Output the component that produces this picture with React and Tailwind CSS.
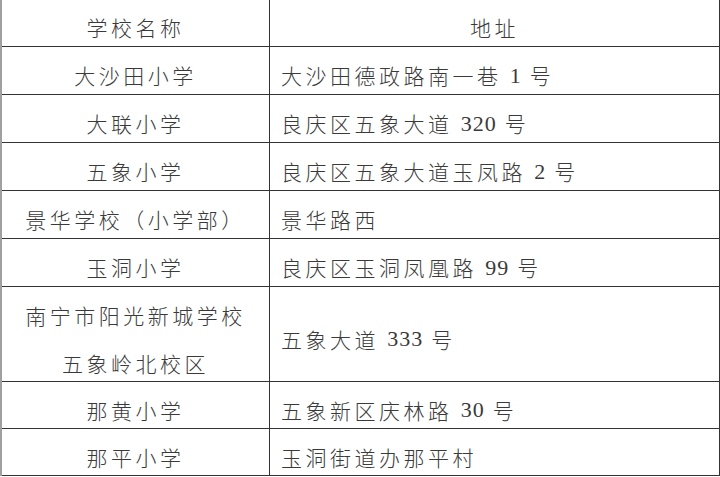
const rows = [
  { name: ['大沙田小学'], addr: '大沙田德政路南一巷 1 号', h: 'h-[48px]' },
  { name: ['大联小学'], addr: '良庆区五象大道 320 号', h: 'h-[48px]' },
  { name: ['五象小学'], addr: '良庆区五象大道玉凤路 2 号', h: 'h-[48px]' },
  { name: ['景华学校（小学部）'], addr: '景华路西', h: 'h-[48px]' },
  { name: ['玉洞小学'], addr: '良庆区玉洞凤凰路 99 号', h: 'h-[48px]' },
  { name: ['南宁市阳光新城学校', '五象岭北校区'], addr: '五象大道 333 号', h: 'h-[95px]' },
  { name: ['那黄小学'], addr: '五象新区庆林路 30 号', h: 'h-[47px]' },
  { name: ['那平小学'], addr: '玉洞街道办那平村', h: 'h-[47px]' },
];

// 数字用衬线体，中文用黑体
function Addr({ text }) {
  return text.split(/(\d+)/).map((part, i) =>
    /^\d+$/.test(part) ? (
      <span
        key={i}
        className="tracking-[1px] text-[22px]"
        style={{ fontFamily: '"Liberation Serif", serif' }}
      >
        {part}
      </span>
    ) : (
      <span key={i}>{part}</span>
    )
  );
}

export default function App() {
  return (
    <div
      className="w-[720px] h-[477px] bg-white text-[#3a3a3a] text-[21px] font-light tracking-[3.5px]"
      style={{ fontFamily: '"Noto Sans CJK SC Light", "Noto Sans CJK SC", sans-serif' }}
    >
      <div className="w-[720px] border-l-2 border-l-[#a0a0a0] border-r border-r-[#333]">
        {/* 表头 */}
        <div className="flex h-[47px] border-b border-[#333]">
          <div className="w-[268px] shrink-0 border-r border-[#333] flex items-center justify-center pt-[10px]">
            学校名称
          </div>
          <div className="flex-1 flex items-center justify-center pt-[10px]">地址</div>
        </div>

        {rows.map((r) => (
          <div key={r.addr} className={`flex ${r.h} border-b border-[#333]`}>
            <div className="w-[268px] shrink-0 border-r border-[#333] flex flex-col items-center justify-center pt-[10px]">
              {r.name.map((n) => (
                <span key={n} className={r.name.length > 1 ? 'leading-[48px]' : 'leading-none'}>
                  {n}
                </span>
              ))}
            </div>
            <div className="flex-1 flex items-center pl-[11px] pt-[10px] leading-none whitespace-pre">
              <Addr text={r.addr} />
            </div>
          </div>
        ))}
      </div>
    </div>
  );
}
